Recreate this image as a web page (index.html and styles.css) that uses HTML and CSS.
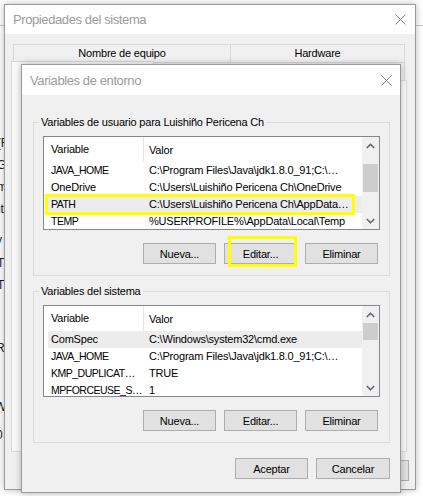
FILE: index.html
```html
<!DOCTYPE html>
<html lang="es">
<head>
<meta charset="utf-8">
<title>Variables de entorno</title>
<link rel="stylesheet" href="styles.css">
</head>
<body>
<div class="desktop">
  <div class="bg-line"></div>
  <div class="frag f1">(F</div>
  <div class="frag f2">G</div>
  <div class="frag f3">m</div>
  <div class="frag f4">nt</div>
  <div class="frag f5">v</div>
  <div class="frag f6">T</div>
  <div class="frag f7">T</div>
  <div class="frag f8">R</div>
  <div class="frag f9">W</div>
  <div class="frag f10">0</div>

  <div class="win outer">
    <div class="titlebar">
      <span>Propiedades del sistema</span>
      <svg class="close" width="11" height="11" viewBox="0 0 11 11"><path d="M0.5 0.5 L10.5 10.5 M10.5 0.5 L0.5 10.5" stroke="#808080" stroke-width="1" fill="none"/></svg>
    </div>
    <div class="obody">
      <div class="tabrow row1">
        <div class="tab t1">Nombre de equipo</div>
        <div class="tab t2">Hardware</div>
      </div>
      <div class="tabrow row2">
        <div class="tab sel"></div>
        <div class="tab t4"></div>
        <div class="tab t5"></div>
      </div>
      <div class="panel"></div>
      <div class="obtns">
        <div class="btn"></div>
        <div class="btn"></div>
        <div class="btn apply"></div>
      </div>
    </div>
  </div>

  <div class="win inner">
    <div class="titlebar">
      <span>Variables de entorno</span>
      <svg class="close" width="11" height="11" viewBox="0 0 11 11"><path d="M0.5 0.5 L10.5 10.5 M10.5 0.5 L0.5 10.5" stroke="#808080" stroke-width="1" fill="none"/></svg>
    </div>
    <div class="ibody">
      <fieldset class="group g1">
        <legend>Variables de usuario para Luishiño Pericena Ch</legend>
        <div class="list user">
          <div class="lmain">
            <div class="lhead"><div class="c1">Variable</div><div class="c2">Valor</div></div>
            <div class="row"><div class="c1 up">JAVA_HOME</div><div class="c2">C:\Program Files\Java\jdk1.8.0_91;C:\…</div></div>
            <div class="row"><div class="c1">OneDrive</div><div class="c2">C:\Users\Luishiño Pericena Ch\OneDrive</div></div>
            <div class="row sel-row"><div class="c1 up">PATH</div><div class="c2">C:\Users\Luishiño Pericena Ch\AppData…</div></div>
            <div class="row"><div class="c1 up">TEMP</div><div class="c2">%USERPROFILE%\AppData\Local\Temp</div></div>
            <div class="mark-row"></div>
          </div>
          <div class="scroll">
            <div class="sbtn"><svg width="9" height="6" viewBox="0 0 9 6"><path d="M0.8 5 L4.5 1.3 L8.2 5" stroke="#606060" stroke-width="1.5" fill="none"/></svg></div>
            <div class="track"><div class="thumb"></div></div>
            <div class="sbtn"><svg width="9" height="6" viewBox="0 0 9 6"><path d="M0.8 1 L4.5 4.7 L8.2 1" stroke="#606060" stroke-width="1.5" fill="none"/></svg></div>
          </div>
        </div>
        <div class="btns">
          <div class="btn">Nueva...</div>
          <div class="btn edit">Editar...<span class="mark-btn"></span></div>
          <div class="btn">Eliminar</div>
        </div>
      </fieldset>

      <fieldset class="group g2">
        <legend>Variables del sistema</legend>
        <div class="list sys">
          <div class="lmain">
            <div class="lhead"><div class="c1">Variable</div><div class="c2">Valor</div></div>
            <div class="row sel-row"><div class="c1">ComSpec</div><div class="c2">C:\Windows\system32\cmd.exe</div></div>
            <div class="row"><div class="c1 up">JAVA_HOME</div><div class="c2">C:\Program Files\Java\jdk1.8.0_91;C:\…</div></div>
            <div class="row"><div class="c1 up">KMP_DUPLICAT…</div><div class="c2">TRUE</div></div>
            <div class="row"><div class="c1 up">MPFORCEUSE_S…</div><div class="c2">1</div></div>
          </div>
          <div class="scroll">
            <div class="sbtn"><svg width="9" height="6" viewBox="0 0 9 6"><path d="M0.8 5 L4.5 1.3 L8.2 5" stroke="#606060" stroke-width="1.5" fill="none"/></svg></div>
            <div class="track"><div class="thumb"></div></div>
            <div class="sbtn"><svg width="9" height="6" viewBox="0 0 9 6"><path d="M0.8 1 L4.5 4.7 L8.2 1" stroke="#606060" stroke-width="1.5" fill="none"/></svg></div>
          </div>
        </div>
        <div class="btns">
          <div class="btn">Nueva...</div>
          <div class="btn">Editar...</div>
          <div class="btn">Eliminar</div>
        </div>
      </fieldset>

      <div class="dbtns">
        <div class="btn">Aceptar</div>
        <div class="btn wide">Cancelar</div>
      </div>
    </div>
  </div>
</div>
</body>
</html>
```

FILE: styles.css
```css
* { box-sizing: border-box; }
html, body { margin: 0; padding: 0; }
body {
  width: 423px;
  height: 496px;
  overflow: hidden;
  background: #ffffff;
  font-family: "Liberation Sans", Arial, sans-serif;
  font-size: 11px;
  letter-spacing: -0.2px;
  color: #000;
}
.desktop { position: relative; width: 423px; height: 496px; overflow: hidden; }

.bg-line { position: absolute; left: 0; right: 0; top: 25px; border-top: 1px solid #c6c6c6; }
.frag { position: absolute; left: -3px; line-height: 14px; color: #1c1c1c; font-size: 12px; }
.f1 { top: 136px; }
.f2 { top: 158px; }
.f3 { top: 180px; }
.f4 { top: 202px; left: -6px; }
.f5 { top: 233px; left: -4px; }
.f6 { top: 256px; }
.f7 { top: 278px; }
.f8 { top: 341px; left: -4px; }
.f9 { top: 400px; left: -5px; }
.f10 { top: 428px; left: -4px; }

.win {
  position: absolute;
  border: 1px solid #9a9a9a;
  background: #f0f0f0;
  box-shadow: 0 0 7px rgba(0,0,0,0.28);
  display: flex;
  flex-direction: column;
}
.outer { left: 4px; top: 4px; width: 412px; height: 486px; z-index: 1; }
.inner { left: 21px; top: 64px; width: 380px; height: 429px; z-index: 2; }

.titlebar {
  background: #fff;
  display: flex;
  align-items: center;
  justify-content: space-between;
  color: #9b9b9b;
  font-size: 13px;
  letter-spacing: -0.4px;
  flex: none;
}
.outer .titlebar { height: 29px; padding: 0 9px 0 8px; }
.inner .titlebar { height: 30px; padding: 0 8px 0 8px; }
.close { display: block; }

/* outer dialog body */
.obody { flex: 1; padding: 10px 8px 0 6px; display: flex; flex-direction: column; }
.tabrow { display: flex; height: 18px; flex: none; }
.row1 { margin-left: 2px; }
.tab {
  border: 1px solid #d9d9d9;
  border-bottom: none;
  height: 18px;
  line-height: 16px;
  text-align: center;
  white-space: nowrap;
  overflow: hidden;
  background: #f0f0f0;
}
.t1 { width: 218px; }
.t2 { width: 175px; margin-left: -1px; }
.sel { width: 143px; height: 20px; margin-top: -1px; background: #fafafa; position: relative; z-index: 1; }
.t4 { width: 144px; margin-left: -1px; }
.t5 { width: 109px; margin-left: -1px; }
.panel { height: 372px; border: 1px solid #d9d9d9; background: #fafafa; flex: none; }
.obtns { display: flex; justify-content: flex-end; gap: 8px; margin-top: 8px; margin-right: -2px; }
.apply { width: 75px; }

/* inner dialog body */
.ibody { flex: 1; padding: 19px 10px 11px 11px; display: flex; flex-direction: column; }
.group {
  margin: 0;
  padding: 6px 9px 11px 9px;
  border: 1px solid #dcdcdc;
  min-width: 0;
}
.group legend {
  padding: 0 2px;
  margin-left: -4px;
  line-height: 16px;
}
.g2 { margin-top: 7px; }

.list {
  border: 1px solid #828790;
  background: #fff;
  display: flex;
  position: relative;
}
.user { height: 94px; }
.sys { height: 92px; }
.lmain { flex: 1; overflow: hidden; position: relative; }
.lhead { display: flex; height: 25px; align-items: center; }
.lhead .c1 { border-right: 1px solid #e5e5e5; height: 25px; line-height: 25px; }
.c1 { width: 100px; padding-left: 7px; flex: none; white-space: nowrap; }
.c1.up { font-size: 10.5px; letter-spacing: -0.5px; }
.c2 { padding-left: 5px; white-space: nowrap; }
.row { display: flex; height: 17px; line-height: 17px; }
.sel-row { background: linear-gradient(to right, transparent 4px, #ececec 4px); }
.mark-row {
  position: absolute;
  left: 1px;
  top: 57px;
  width: 310px;
  height: 21px;
  border: 3px solid #ffff00;
}

.scroll { width: 17px; background: #f0f0f0; display: flex; flex-direction: column; flex: none; }
.sbtn { height: 17px; display: flex; align-items: center; justify-content: center; flex: none; }
.track { flex: 1; }
.thumb { margin: 0 1px; background: #cdcdcd; }
.user .thumb { margin-top: 10px; height: 28px; }
.sys .thumb { margin-top: 0; height: 17px; }

.btns { display: flex; justify-content: flex-end; gap: 8px; margin-top: 13px; margin-right: 2px; }
.btn {
  width: 73px;
  height: 21px;
  border: 1px solid #adadad;
  background: #e1e1e1;
  display: flex;
  align-items: center;
  justify-content: center;
  position: relative;
  flex: none;
}
.wide { width: 74px; }
.mark-btn {
  position: absolute;
  left: 3px;
  top: -8px;
  width: 69px;
  height: 31px;
  border: 3px solid #ffff00;
}
.dbtns { display: flex; justify-content: flex-end; gap: 8px; margin-top: 15px; }
```
